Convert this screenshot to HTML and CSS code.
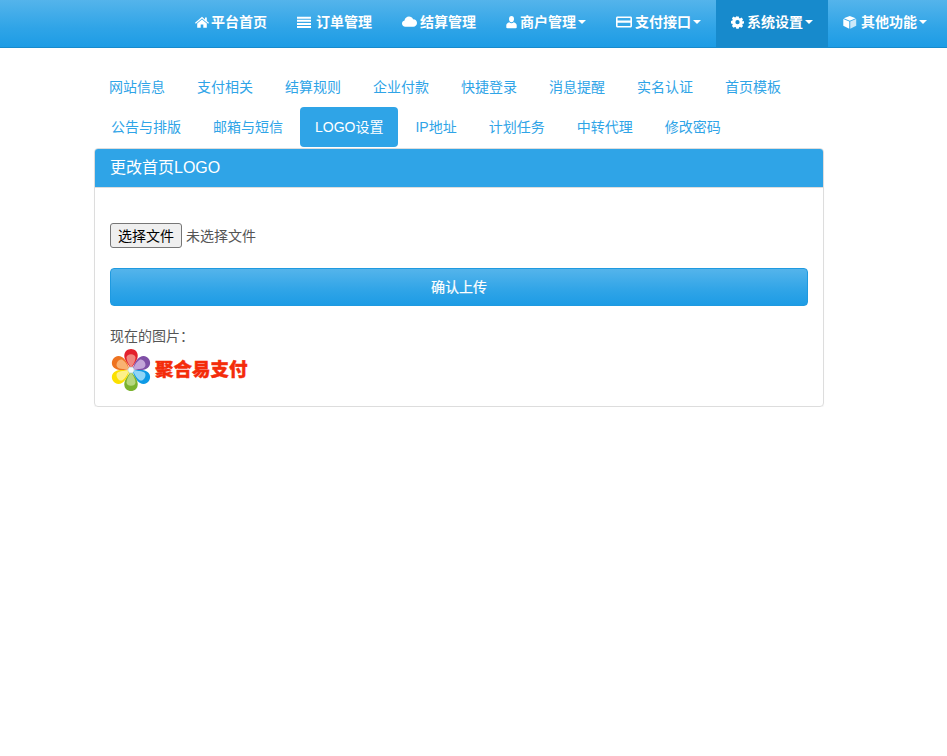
FILE: index.html
```html
<!DOCTYPE html>
<html lang="zh-CN">
<head>
<meta charset="utf-8">
<title>更改首页LOGO</title>
<link rel="stylesheet" href="styles.css">
</head>
<body>
<nav class="navbar">
  <ul class="menu">
    <li><a href="#"><svg class="ico ico-home" viewBox="0 0 14 14"><path d="M7 1.800 0 7.800l.8 1L7 3.400l6.200 5.400.8-1-2.200-1.900V2.400h-1.800v2L7 1.800Z"/><path d="M2.200 8.500 7 4.400l4.800 4.100v4.300H8.300V9.600H5.700v3.200H2.200V8.500Z"/></svg>平台首页</a></li>
    <li><a href="#"><svg class="ico ico-list" viewBox="0 0 14 14"><path d="M0 1.700h14v2H0zM0 4.800h14v2H0zM0 7.900h14v2H0zM0 11h14v2H0z"/></svg>订单管理</a></li>
    <li><a href="#"><svg class="ico ico-cloud" viewBox="0 0 15 14"><path d="M3.400 11.800C1.400 11.800 0 10.400 0 8.600c0-1.500 1-2.800 2.500-3.100C2.800 3.300 4.700 1.600 7 1.600c1.800 0 3.400 1.100 4.100 2.700 2.200-.1 3.900 1.600 3.900 3.800 0 2-1.600 3.700-3.700 3.700H3.400Z"/></svg>结算管理</a></li>
    <li><a href="#"><svg class="ico ico-user" viewBox="0 0 11 14"><path d="M5.500 1C3.900 1 3 2.300 3 3.900c0 1.500.9 3.300 2.500 3.300S8 5.400 8 3.900C8 2.300 7.100 1 5.500 1Z"/><path d="M3.300 7.200C1.500 7.800.3 8.900.3 10.200v2.300c0 .4.400.7 1 .7h8.400c.6 0 1-.3 1-.7v-2.300c0-1.300-1.200-2.400-3-3-.6.700-1.400 1.100-2.200 1.100s-1.600-.4-2.200-1.100Z"/></svg>商户管理<span class="caret"></span></a></li>
    <li><a href="#"><svg class="ico ico-card" viewBox="0 0 16 14"><path fill-rule="evenodd" d="M1.500 1.500h13c.8 0 1.500.7 1.500 1.500v8c0 .8-.7 1.500-1.500 1.500h-13C.7 12.500 0 11.800 0 11V3c0-.8.7-1.500 1.500-1.500ZM1.600 3.100v2.400h12.800V3.100H1.600Zm0 4.700v3.100h12.800V7.800H1.600Z"/></svg>支付接口<span class="caret"></span></a></li>
    <li class="active"><a href="#"><svg class="ico ico-gear" viewBox="0 0 14 14"><path fill-rule="evenodd" d="M5.700 1h2.600l.4 1.700 1 .4 1.500-.9 1.800 1.800-.9 1.500.4 1L14 5.900v2.600l-1.500.4-.4 1 .9 1.500-1.800 1.800-1.500-.9-1 .4-.4 1.500H5.700l-.4-1.500-1-.4-1.500.9L1 11.400l.9-1.500-.4-1L0 8.500V5.900l1.500-.4.4-1L1 3l1.800-1.800 1.500.9 1-.4.400-1.700ZM7 4.900a2.300 2.300 0 1 0 0 4.600 2.300 2.300 0 0 0 0-4.600Z"/></svg>系统设置<span class="caret"></span></a></li>
    <li><a href="#"><svg class="ico ico-cube" viewBox="0 0 14 14"><path d="M7 .7 13.200 3 7 5.600.8 3 7 .7Z"/><path d="M.3 4 6.500 6.600V14L.3 11V4Z"/><path d="M13.700 4 7.500 6.600V14l6.200-3V4Z" fill-opacity=".75"/></svg>其他功能<span class="caret"></span></a></li>
  </ul>
</nav>

<main class="wrap">
  <ul class="pills">
    <li><a href="#">网站信息</a></li>
    <li><a href="#">支付相关</a></li>
    <li><a href="#">结算规则</a></li>
    <li><a href="#">企业付款</a></li>
    <li><a href="#">快捷登录</a></li>
    <li><a href="#">消息提醒</a></li>
    <li><a href="#">实名认证</a></li>
    <li><a href="#">首页模板</a></li>
    <li><a href="#">公告与排版</a></li>
    <li><a href="#">邮箱与短信</a></li>
    <li class="current"><a href="#">LOGO设置</a></li>
    <li><a href="#">IP地址</a></li>
    <li><a href="#">计划任务</a></li>
    <li><a href="#">中转代理</a></li>
    <li><a href="#">修改密码</a></li>
  </ul>

  <section class="panel">
    <h3 class="panel-title">更改首页LOGO</h3>
    <div class="panel-body">
      <div class="file-row">
        <button type="button" class="file-btn">选择文件</button>
        <span class="file-name">未选择文件</span>
      </div>
      <button type="button" class="submit">确认上传</button>
      <p class="current-label">现在的图片：</p>
      <div class="logo">
        <svg class="flower" viewBox="0 0 42 44">
          <defs>
            <path id="petal" d="M21 20.500C16.500 15 14.300 11.500 14.300 7.600 14.300 3.800 17.300 1 21 1s6.700 2.800 6.700 6.600c0 3.900-2.200 7.400-6.700 12.900Z"/>
            <path id="inner" d="M21 19.500C18 15.500 16.500 12.500 16.500 9.500c0-2 2-3.300 4.500-3.300s4.500 1.300 4.500 3.300c0 3-1.500 6-4.500 10Z"/>
          </defs>
          <g transform="rotate(0 21 22)"><use href="#petal" fill="#e3202c"/><use href="#inner" fill="#f0877f"/></g>
          <g transform="rotate(60 21 22)"><use href="#petal" fill="#7f4fa6"/><use href="#inner" fill="#c3a4d8"/></g>
          <g transform="rotate(120 21 22)"><use href="#petal" fill="#0d9ae6"/><use href="#inner" fill="#8fd5f7"/></g>
          <g transform="rotate(180 21 22)"><use href="#petal" fill="#7bb32e"/><use href="#inner" fill="#b7d77f"/></g>
          <g transform="rotate(240 21 22)"><use href="#petal" fill="#fbe000"/><use href="#inner" fill="#fdf08a"/></g>
          <g transform="rotate(300 21 22)"><use href="#petal" fill="#ee7320"/><use href="#inner" fill="#f9b272"/></g>
          <circle cx="21" cy="22" r="3" fill="#f1f8f8" stroke="#b8d8d8" stroke-width=".6"/>
        </svg>
        <span class="logo-text">聚合易支付</span>
      </div>
    </div>
  </section>
</main>
</body>
</html>
```

FILE: styles.css
```css
* {
  box-sizing: border-box;
}

html,
body {
  margin: 0;
  padding: 0;
  background: #fff;
}

body {
  font-family: "Liberation Sans", "Noto Sans CJK SC", sans-serif;
  font-size: 14px;
  line-height: 20px;
  color: #555;
}

a {
  text-decoration: none;
}

ul {
  list-style: none;
  margin: 0;
  padding: 0;
}

.navbar {
  height: 48px;
  background-image: linear-gradient(#54b4eb, #2fa4e7 60%, #1d9ce5);
  border-bottom: 1px solid #178acc;
  display: flex;
  justify-content: flex-end;
  padding-right: 5px;
}

.menu {
  display: flex;
  height: 47px;
}

.menu a {
  display: flex;
  align-items: center;
  height: 47px;
  padding: 0 15px 4px;
  color: #fff;
  font-weight: 700;
  text-shadow: 0 1px 0 rgba(0, 0, 0, .05);
  white-space: nowrap;
}

.menu .active a {
  background: #178acc;
}

.ico {
  height: 14px;
  fill: #fff;
  flex: none;
}

.ico-home {
  width: 14px;
  margin-right: 2.500px;
}

.ico-list {
  width: 14px;
  margin-right: 5px;
}

.ico-cloud {
  width: 15px;
  margin-right: 3px;
}

.ico-user {
  width: 11px;
  margin-right: 3px;
}

.ico-card {
  width: 16px;
  margin-right: 3px;
}

.ico-gear {
  width: 13px;
  margin-right: 3px;
}

.ico-cube {
  width: 13.500px;
  margin-right: 4.500px;
}

.caret {
  width: 0;
  height: 0;
  margin-left: 2px;
  border-top: 4px solid #fff;
  border-left: 4px solid transparent;
  border-right: 4px solid transparent;
}

.wrap {
  width: 730px;
  margin: 19px 0 0 94px;
}

.pills {
  display: flex;
  flex-wrap: wrap;
}

.pills li + li {
  margin-left: 2px;
}

.pills a {
  display: block;
  height: 40px;
  padding: 10px 15px;
  border-radius: 4px;
  color: #2fa4e7;
}

.pills .current a {
  background: #2fa4e7;
  color: #fff;
}

.panel {
  margin-top: 1px;
  border: 1px solid #ddd;
  border-radius: 4px;
  box-shadow: 0 1px 1px rgba(0, 0, 0, .05);
}

.panel-title {
  margin: 0;
  height: 39px;
  padding: 9px 15px;
  background: #2fa4e7;
  border-bottom: 1px solid #ddd;
  border-radius: 3px 3px 0 0;
  color: #fff;
  font-size: 16px;
  font-weight: 400;
  line-height: 20px;
}

.panel-body {
  padding: 35px 15px 13px;
}

.file-row {
  display: flex;
  align-items: center;
  height: 25px;
}

.file-btn {
  width: 72px;
  height: 25px;
  padding: 0 0 2px;
  background: #efefef;
  border: 1px solid #767676;
  border-radius: 3px;
  color: #000;
  font: 14px "Liberation Sans", "Noto Sans CJK SC", sans-serif;
}

.file-name {
  margin-left: 4px;
}

.submit {
  display: block;
  width: 100%;
  height: 38px;
  margin-top: 20px;
  background-image: linear-gradient(#54b4eb, #2fa4e7 60%, #1d9ce5);
  border: 1px solid #1f9ae0;
  border-radius: 4px;
  color: #fff;
  font: 14px/20px "Liberation Sans", "Noto Sans CJK SC", sans-serif;
  -webkit-text-stroke: .2px #fff;
  text-shadow: 0 1px 0 rgba(0, 0, 0, .05);
}

.current-label {
  margin: 20px 0 0;
}

.logo {
  display: flex;
  align-items: center;
  height: 46px;
  margin-top: 1px;
}

.flower {
  width: 42px;
  height: 44px;
  margin-top: -1px;
  flex: none;
}

.logo-text {
  margin-left: 3px;
  color: #f42c0a;
  font-size: 18.500px;
  font-weight: 900;
  line-height: 24px;
  -webkit-text-stroke: .4px #f42c0a;
  white-space: nowrap;
}
```
